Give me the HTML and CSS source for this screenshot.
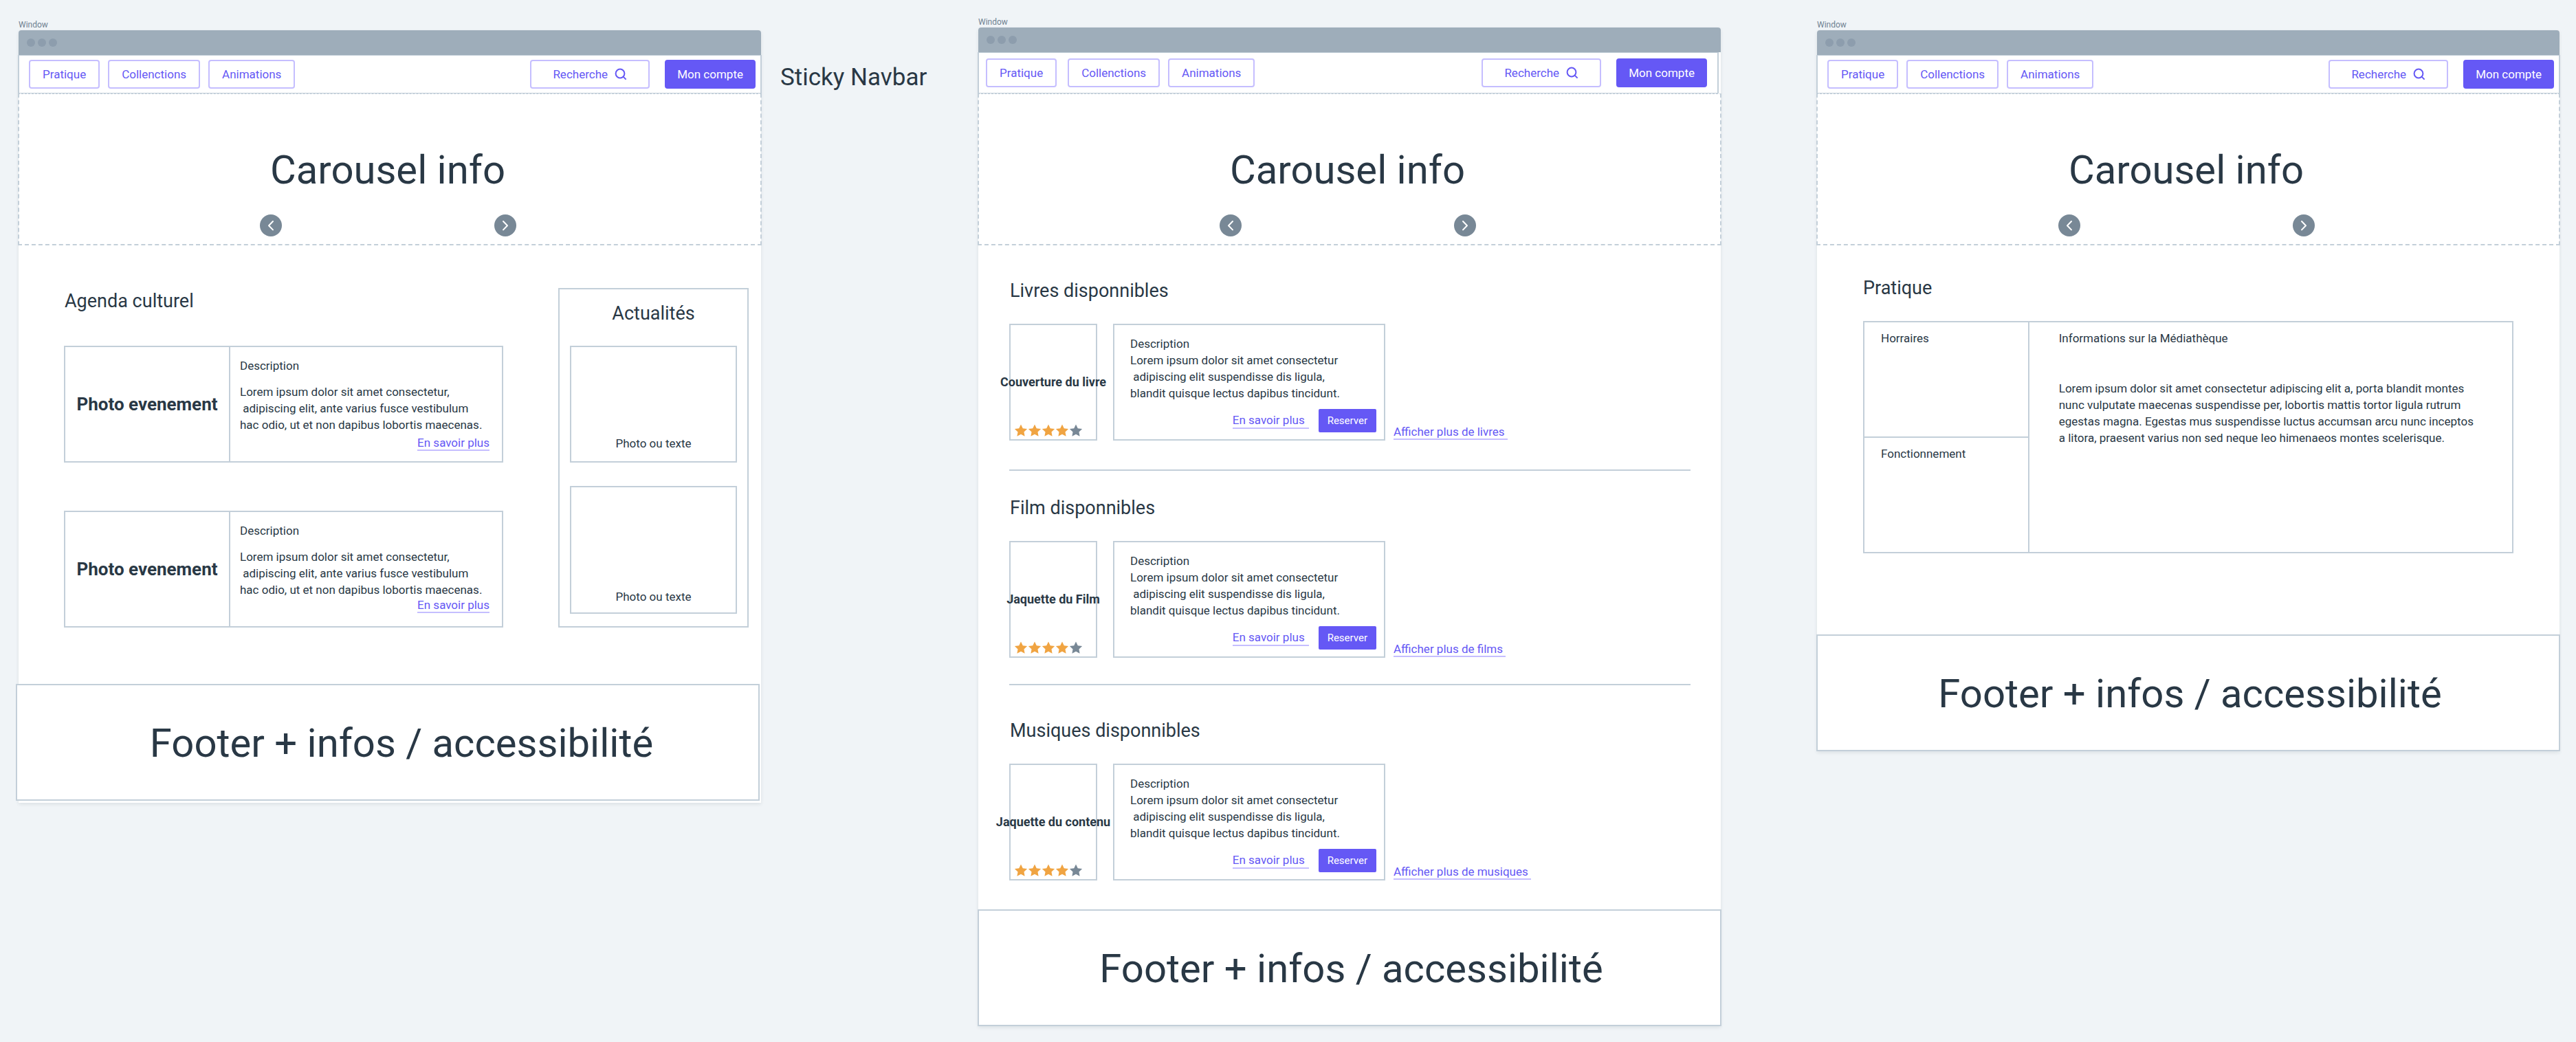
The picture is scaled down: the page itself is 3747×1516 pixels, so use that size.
FILE: index.html
```html
<!DOCTYPE html>
<html lang="fr">
<head>
<meta charset="utf-8">
<title>Médiathèque – wireframes</title>
<meta name="viewport" content="width=device-width, initial-scale=1">
<link rel="stylesheet" href="styles.css">
</head>
<body>
<svg class="sprite" aria-hidden="true">
  <symbol id="search" viewBox="0 0 18 18"><circle cx="8" cy="8" r="6.400" fill="none" stroke="currentColor" stroke-width="2"/><path d="M12.6 12.6 16.6 16.6" fill="none" stroke="currentColor" stroke-width="2"/></symbol>
  <symbol id="prev" viewBox="0 0 32 32"><path d="M19 10 13 16.200 19 22.400" fill="none" stroke="currentColor" stroke-width="2" stroke-linecap="round" stroke-linejoin="round"/></symbol>
  <symbol id="next" viewBox="0 0 32 32"><path d="M13 10 19 16.200 13 22.400" fill="none" stroke="currentColor" stroke-width="2" stroke-linecap="round" stroke-linejoin="round"/></symbol>
  <symbol id="star" viewBox="0 0 20 20"><path d="M10 1.400 12.760 7.200 19.100 8 14.470 12.450 15.600 18.800 10 15.700 4.400 18.800 5.530 12.450 .9 8 7.240 7.200Z" fill="currentColor"/></symbol>
</svg>

<div class="canvas">

  <section class="frame">
    <p class="frame-label">Window</p>
    <div class="window">
      <div class="titlebar"><i></i><i></i><i></i></div>
      <nav class="navbar">
        <button class="btn" type="button">Pratique</button>
        <button class="btn" type="button">Collenctions</button>
        <button class="btn" type="button">Animations</button>
        <button class="btn btn-search" type="button">Recherche <svg><use href="#search"/></svg></button>
        <button class="btn-primary" type="button">Mon compte</button>
      </nav>
      <div class="carousel">
        <h1>Carousel info</h1>
        <div class="arrows">
          <button type="button" aria-label="Précédent"><svg><use href="#prev"/></svg></button>
          <button type="button" aria-label="Suivant"><svg><use href="#next"/></svg></button>
        </div>
      </div>
      <main class="home">
        <div class="agenda">
          <h2>Agenda culturel</h2>
          <article class="event">
            <h3>Photo evenement</h3>
            <div class="event-text">
              <p>Description</p>
              <p>Lorem ipsum dolor sit amet consectetur,<br>&nbsp;adipiscing elit, ante varius fusce vestibulum<br>hac odio, ut et non dapibus lobortis maecenas.</p>
              <a class="link" href="#">En savoir plus</a>
            </div>
          </article>
          <article class="event">
            <h3>Photo evenement</h3>
            <div class="event-text">
              <p>Description</p>
              <p>Lorem ipsum dolor sit amet consectetur,<br>&nbsp;adipiscing elit, ante varius fusce vestibulum<br>hac odio, ut et non dapibus lobortis maecenas.</p>
              <a class="link" href="#">En savoir plus</a>
            </div>
          </article>
        </div>
        <aside class="news">
          <h2>Actualités</h2>
          <div class="news-item">Photo ou texte</div>
          <div class="news-item news-item-tall">Photo ou texte</div>
        </aside>
      </main>
      <footer class="footer footer-shifted">Footer + infos / accessibilité</footer>
    </div>
  </section>

  <p class="note">Sticky Navbar</p>

  <section class="frame frame-raised">
    <p class="frame-label">Window</p>
    <div class="window">
      <div class="titlebar"><i></i><i></i><i></i></div>
      <nav class="navbar navbar-tall">
        <button class="btn" type="button">Pratique</button>
        <button class="btn" type="button">Collenctions</button>
        <button class="btn" type="button">Animations</button>
        <button class="btn btn-search" type="button">Recherche <svg><use href="#search"/></svg></button>
        <button class="btn-primary" type="button">Mon compte</button>
      </nav>
      <div class="carousel">
        <h1>Carousel info</h1>
        <div class="arrows">
          <button type="button" aria-label="Précédent"><svg><use href="#prev"/></svg></button>
          <button type="button" aria-label="Suivant"><svg><use href="#next"/></svg></button>
        </div>
      </div>
      <main class="collections">
        <section>
          <h2>Livres disponnibles</h2>
          <div class="item">
            <div class="cover">
              <h3>Couverture du livre</h3>
              <div class="stars" role="img" aria-label="4 sur 5"><svg><use href="#star"/></svg><svg><use href="#star"/></svg><svg><use href="#star"/></svg><svg><use href="#star"/></svg><svg><use href="#star"/></svg></div>
            </div>
            <div class="summary">
              <p>Description<br>Lorem ipsum dolor sit amet consectetur<br>&nbsp;adipiscing elit suspendisse dis ligula,<br>blandit quisque lectus dapibus tincidunt.</p>
              <div class="actions">
                <a class="link" href="#">En savoir plus</a>
                <button class="btn-primary btn-small" type="button">Reserver</button>
              </div>
            </div>
            <div class="more"><a class="link" href="#">Afficher plus de livres</a></div>
          </div>
        </section>
        <section>
          <h2>Film disponnibles</h2>
          <div class="item">
            <div class="cover">
              <h3>Jaquette du Film</h3>
              <div class="stars" role="img" aria-label="4 sur 5"><svg><use href="#star"/></svg><svg><use href="#star"/></svg><svg><use href="#star"/></svg><svg><use href="#star"/></svg><svg><use href="#star"/></svg></div>
            </div>
            <div class="summary">
              <p>Description<br>Lorem ipsum dolor sit amet consectetur<br>&nbsp;adipiscing elit suspendisse dis ligula,<br>blandit quisque lectus dapibus tincidunt.</p>
              <div class="actions">
                <a class="link" href="#">En savoir plus</a>
                <button class="btn-primary btn-small" type="button">Reserver</button>
              </div>
            </div>
            <div class="more"><a class="link" href="#">Afficher plus de films</a></div>
          </div>
        </section>
        <section>
          <h2>Musiques disponnibles</h2>
          <div class="item">
            <div class="cover">
              <h3>Jaquette du contenu</h3>
              <div class="stars" role="img" aria-label="4 sur 5"><svg><use href="#star"/></svg><svg><use href="#star"/></svg><svg><use href="#star"/></svg><svg><use href="#star"/></svg><svg><use href="#star"/></svg></div>
            </div>
            <div class="summary">
              <p>Description<br>Lorem ipsum dolor sit amet consectetur<br>&nbsp;adipiscing elit suspendisse dis ligula,<br>blandit quisque lectus dapibus tincidunt.</p>
              <div class="actions">
                <a class="link" href="#">En savoir plus</a>
                <button class="btn-primary btn-small" type="button">Reserver</button>
              </div>
            </div>
            <div class="more"><a class="link" href="#">Afficher plus de musiques</a></div>
          </div>
        </section>
      </main>
      <footer class="footer">Footer + infos / accessibilité</footer>
    </div>
  </section>

  <section class="frame frame-last">
    <p class="frame-label">Window</p>
    <div class="window">
      <div class="titlebar"><i></i><i></i><i></i></div>
      <nav class="navbar">
        <button class="btn" type="button">Pratique</button>
        <button class="btn" type="button">Collenctions</button>
        <button class="btn" type="button">Animations</button>
        <button class="btn btn-search" type="button">Recherche <svg><use href="#search"/></svg></button>
        <button class="btn-primary" type="button">Mon compte</button>
      </nav>
      <div class="carousel">
        <h1>Carousel info</h1>
        <div class="arrows">
          <button type="button" aria-label="Précédent"><svg><use href="#prev"/></svg></button>
          <button type="button" aria-label="Suivant"><svg><use href="#next"/></svg></button>
        </div>
      </div>
      <main class="practical">
        <h2>Pratique</h2>
        <div class="panels">
          <div class="panel-side">
            <p>Horraires</p>
            <p>Fonctionnement</p>
          </div>
          <div class="panel-info">
            <p>Informations sur la Médiathèque</p>
            <p>Lorem ipsum dolor sit amet consectetur adipiscing elit a, porta blandit montes<br>nunc vulputate maecenas suspendisse per, lobortis mattis tortor ligula rutrum<br>egestas magna. Egestas mus suspendisse luctus accumsan arcu nunc inceptos<br>a litora, praesent varius non sed neque leo himenaeos montes scelerisque.</p>
          </div>
        </div>
      </main>
      <footer class="footer">Footer + infos / accessibilité</footer>
    </div>
  </section>

</div>
</body>
</html>
```
FILE: styles.css
```css
:root {
  --ink: #293845;
  --line: #c3cfd9;
  --accent: #6558f5;
  --accent-soft: #c5beff;
  --slate: #788896;
}

* { box-sizing: border-box; }

body {
  margin: 0;
  min-height: 100vh;
  background: #f0f4f7;
  color: var(--ink);
  font: 17px/24px Roboto, "Liberation Sans", sans-serif;
}

h1, h2, h3, p { margin: 0; font-weight: 400; }
h2 { font-size: 27px; line-height: 32px; }
button { font: inherit; cursor: pointer; }
.sprite { position: absolute; width: 0; height: 0; }

/* Artboard */
.canvas {
  display: grid;
  grid-template-columns: 1080fr 316fr 1080fr 140fr 1080fr;
  align-items: start;
  padding: 24px 24px 23px 27px;
}
.frame { padding-top: 4px; }
.frame-raised { padding-top: 0; }
.frame-last { grid-column: 5; }
.frame-label { font-size: 12px; line-height: 16px; color: #6f8191; }
.note { padding: 69px 0 0 28px; font-size: 35px; line-height: 40px; }

.window {
  background: #fff;
  border-radius: 4px 4px 0 0;
  box-shadow: 0 2px 5px rgba(41, 56, 69, .1);
}
.titlebar {
  display: flex;
  align-items: center;
  gap: 4px;
  height: 36px;
  padding: 0 12px;
  background: #9eadba;
  border-radius: 4px 4px 0 0;
}
.titlebar i { width: 12px; height: 12px; border-radius: 50%; background: #8d9dad; }

/* Navigation */
.navbar {
  display: flex;
  align-items: center;
  gap: 12px;
  margin: 0 -1px;
  padding: 6px 7px 6px 14px;
  border: solid var(--line);
  border-width: 1px 2px;
}
.navbar-tall { margin-right: 3px; padding: 8px 15px 8px 10px; }
.navbar-tall .btn:first-child { margin-right: 4px; }

.btn, .btn-primary {
  height: 42px;
  padding: 0 18px;
  border: 2px solid var(--accent-soft);
  border-radius: 4px;
  background: #fff;
  color: var(--accent);
  white-space: nowrap;
}
.btn-primary {
  padding: 0 16px;
  border-color: var(--accent);
  background: var(--accent);
  color: #fff;
}
.btn-small { height: 34px; padding: 0 11px; font-size: 15px; border-radius: 2px; }
.btn-search {
  display: flex;
  align-items: center;
  justify-content: center;
  gap: 10px;
  width: 174px;
  margin: 0 10px 0 auto;
}
.btn-search svg { width: 18px; height: 18px; }

/* Carousel */
.carousel {
  display: flex;
  flex-direction: column;
  align-items: center;
  gap: 30px;
  margin: 0 -1px;
  padding: 75px 6px 11px 0;
  border: 2px dashed var(--line);
  border-top-width: 1px;
}
.carousel h1 { font-size: 58px; line-height: 70px; }
.arrows { display: flex; gap: 309px; }
.arrows button {
  width: 32px;
  height: 32px;
  padding: 0;
  border: 0;
  border-radius: 50%;
  background: var(--slate);
  color: #fff;
}
.arrows svg { display: block; width: 32px; height: 32px; }

/* Links */
.link {
  display: inline-block;
  border-bottom: 2px solid var(--accent-soft);
  color: var(--accent);
  line-height: 20px;
  text-decoration: none;
  white-space: nowrap;
}

/* Home */
.home {
  display: grid;
  grid-template-columns: 639fr 277fr;
  column-gap: 80px;
  padding: 62px 18px 82px 66px;
}
.agenda { display: flex; flex-direction: column; }
.agenda h2 { padding: 3px 0 49px 1px; }
.event {
  display: grid;
  grid-template-columns: 240fr 395fr;
  min-height: 170px;
  border: 2px solid var(--line);
}
.event + .event { margin-top: 70px; }
.event h3 {
  display: grid;
  place-items: center;
  border-right: 2px solid var(--line);
  font-size: 26px;
  font-weight: 700;
}
.event-text {
  display: flex;
  flex-direction: column;
  gap: 14px;
  padding: 15px 18px 0 14px;
  white-space: nowrap;
}
.event-text .link { align-self: flex-end; margin-top: -10px; }
.event + .event .link { margin-top: -14px; }

.news {
  display: flex;
  flex-direction: column;
  padding: 19px 15px 18px;
  border: 2px solid var(--line);
  text-align: center;
}
.news h2 { margin-bottom: 31px; }
.news-item {
  display: flex;
  align-items: flex-end;
  justify-content: center;
  min-height: 170px;
  padding-bottom: 14px;
  border: 2px solid var(--line);
}
.news-item-tall { min-height: 186px; margin-top: 34px; padding-bottom: 11px; }

/* Collections */
.collections { padding: 50px 44px 42px 45px; }
.collections h2 { margin-bottom: 32px; padding-left: 1px; }
.collections section + section {
  margin-top: 42px;
  padding-top: 38px;
  border-top: 2px solid var(--line);
}
.collections section:last-child { margin-top: 38px; padding-top: 50px; }
.item {
  display: grid;
  grid-template-columns: 151fr 408fr 432fr;
  min-height: 170px;
}
.cover {
  display: grid;
  margin-right: 23px;
  border: 2px solid var(--line);
  min-width: 0;
}
.cover h3, .stars { grid-area: 1 / 1; }
.cover h3 {
  display: flex;
  align-items: center;
  justify-content: center;
  min-width: 0;
  font-size: 18px;
  font-weight: 700;
  white-space: nowrap;
}
.stars { display: flex; align-self: end; padding: 0 0 3px 5px; color: #f0a442; }
.stars svg { width: 20px; height: 20px; }
.stars svg:last-child { color: var(--slate); }
.summary {
  display: flex;
  flex-direction: column;
  justify-content: space-between;
  margin-right: 12px;
  padding: 15px 11px 10px 23px;
  border: 2px solid var(--line);
  white-space: nowrap;
}
.actions { display: flex; align-items: center; justify-content: flex-end; gap: 14px; }
.actions .link { padding-right: 6px; line-height: 22px; }
.more { display: flex; align-items: flex-end; padding-bottom: 1px; }
.more .link { padding-right: 4px; }

/* Practical */
.practical { padding: 46px 67px 118px 67px; }
.practical h2 { margin-bottom: 32px; }
.panels {
  display: grid;
  grid-template-columns: 240fr 703fr;
  border: 2px solid var(--line);
}
.panel-side { border-right: 2px solid var(--line); }
.panel-side p { min-height: 166px; padding: 11px 24px; }
.panel-side p + p { min-height: 168px; border-top: 2px solid var(--line); }
.panel-info { padding: 11px 0 0 43px; white-space: nowrap; }
.panel-info p + p { margin-top: 49px; }

/* Footer */
.footer {
  display: flex;
  align-items: center;
  justify-content: center;
  min-height: 170px;
  margin: 0 -1px;
  padding: 2px 0 0 5px;
  border: 2px solid var(--line);
  background: #fff;
  font-size: 58px;
  line-height: 70px;
}
.footer-shifted { margin: 0 2px 0 -4px; padding-left: 40px; }
.window:has(.footer-shifted) { padding-bottom: 3px; }
```
